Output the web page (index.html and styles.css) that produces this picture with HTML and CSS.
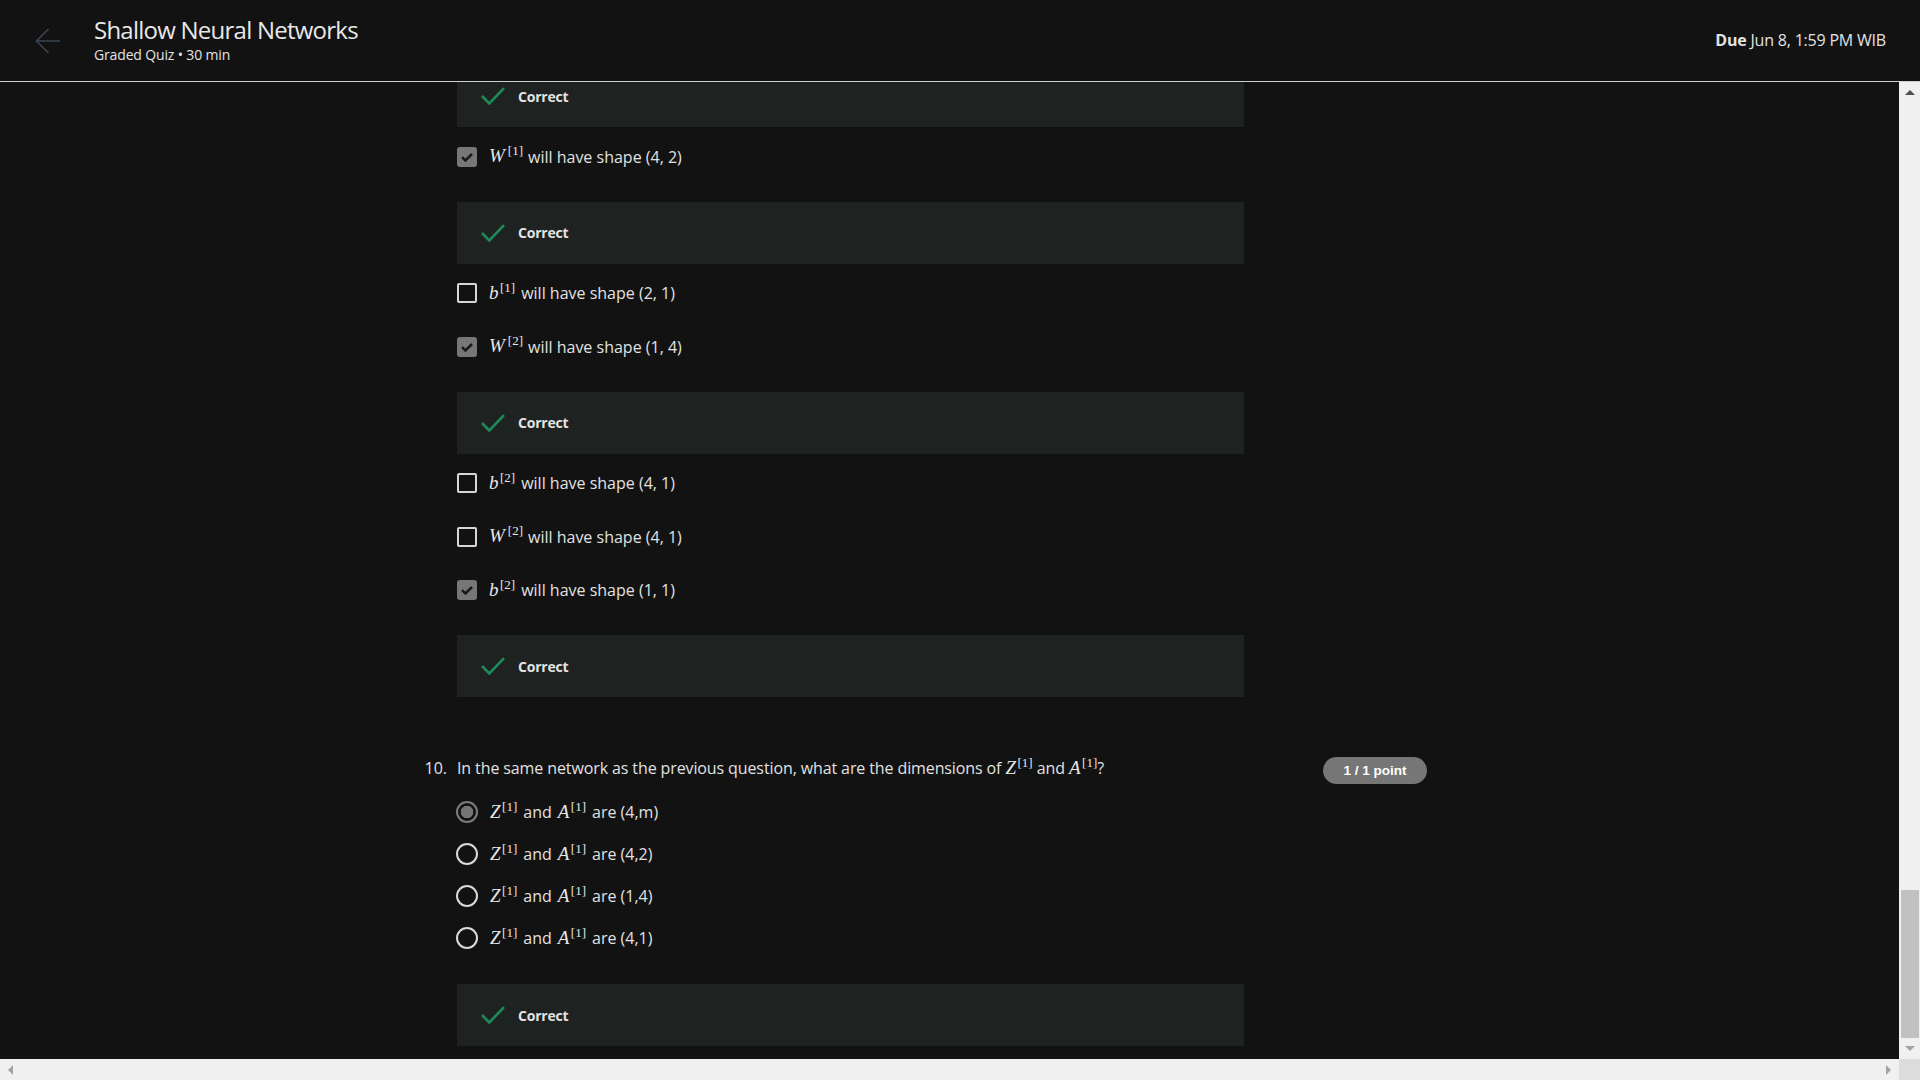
FILE: index.html
```html
<!DOCTYPE html>
<html lang="en">
<head>
<meta charset="utf-8">
<title>Shallow Neural Networks</title>
<link rel="stylesheet" href="styles.css">
</head>
<body>
<header class="topbar">
  <a class="back" aria-label="Back">
    <svg width="26" height="26" viewBox="0 0 26 26"><path d="M25 13H1.5M13.5 1L1.5 13l12 12" fill="none" stroke="#3b4552" stroke-width="1.6"/></svg>
  </a>
  <div class="titles">
    <h1 class="title">Shallow Neural Networks</h1>
    <div class="subtitle">Graded Quiz • 30 min</div>
  </div>
  <div class="due"><b>Due</b> Jun 8, 1:59 PM WIB</div>
</header>
<div class="frame">
  <div class="viewport">
    <main class="quiz">
      <div class="answers">
        <div class="feedback first"><svg class="ok" width="24" height="18" viewBox="0 0 24 18"><path d="M1 9l7.3 7.5L23 1.2" fill="none" stroke="#1f8a57" stroke-width="2.6"/></svg><span>Correct</span></div>

        <div class="opt"><span class="cb on"><svg width="20" height="20" viewBox="0 0 20 20"><path d="M5 10.2l3.4 3.3L15 7" fill="none" stroke="#1a1a1a" stroke-width="2.5"/></svg></span><span class="m w"><i>W</i><sup>[1]</sup></span><span>will have shape (4, 2)</span></div>
        <div class="feedback"><svg class="ok" width="24" height="18" viewBox="0 0 24 18"><path d="M1 9l7.3 7.5L23 1.2" fill="none" stroke="#1f8a57" stroke-width="2.6"/></svg><span>Correct</span></div>

        <div class="opt"><span class="cb"></span><span class="m"><i>b</i><sup>[1]</sup></span><span>will have shape (2, 1)</span></div>
        <div class="opt"><span class="cb on"><svg width="20" height="20" viewBox="0 0 20 20"><path d="M5 10.2l3.4 3.3L15 7" fill="none" stroke="#1a1a1a" stroke-width="2.5"/></svg></span><span class="m w"><i>W</i><sup>[2]</sup></span><span>will have shape (1, 4)</span></div>
        <div class="feedback"><svg class="ok" width="24" height="18" viewBox="0 0 24 18"><path d="M1 9l7.3 7.5L23 1.2" fill="none" stroke="#1f8a57" stroke-width="2.6"/></svg><span>Correct</span></div>

        <div class="opt"><span class="cb"></span><span class="m"><i>b</i><sup>[2]</sup></span><span>will have shape (4, 1)</span></div>
        <div class="opt"><span class="cb"></span><span class="m w"><i>W</i><sup>[2]</sup></span><span>will have shape (4, 1)</span></div>
        <div class="opt"><span class="cb on"><svg width="20" height="20" viewBox="0 0 20 20"><path d="M5 10.2l3.4 3.3L15 7" fill="none" stroke="#1a1a1a" stroke-width="2.5"/></svg></span><span class="m"><i>b</i><sup>[2]</sup></span><span>will have shape (1, 1)</span></div>
        <div class="feedback"><svg class="ok" width="24" height="18" viewBox="0 0 24 18"><path d="M1 9l7.3 7.5L23 1.2" fill="none" stroke="#1f8a57" stroke-width="2.6"/></svg><span>Correct</span></div>
      </div>

      <section class="question">
        <div class="q-head">
          <div class="qnum">10.</div>
          <div class="qtext">In the same network as the previous question, what are the dimensions of <span class="m"><i>Z</i><sup>[1]</sup></span> and <span class="m"><i>A</i><sup>[1]</sup></span>?</div>
          <div class="badge">1 / 1 point</div>
        </div>
        <div class="answers radios">
          <div class="ropt"><span class="rb on"></span><span class="m"><i>Z</i><sup>[1]</sup></span><span class="and">and</span><span class="m"><i>A</i><sup>[1]</sup></span><span>are (4,m)</span></div>
          <div class="ropt"><span class="rb"></span><span class="m"><i>Z</i><sup>[1]</sup></span><span class="and">and</span><span class="m"><i>A</i><sup>[1]</sup></span><span>are (4,2)</span></div>
          <div class="ropt"><span class="rb"></span><span class="m"><i>Z</i><sup>[1]</sup></span><span class="and">and</span><span class="m"><i>A</i><sup>[1]</sup></span><span>are (1,4)</span></div>
          <div class="ropt"><span class="rb"></span><span class="m"><i>Z</i><sup>[1]</sup></span><span class="and">and</span><span class="m"><i>A</i><sup>[1]</sup></span><span>are (4,1)</span></div>
          <div class="feedback last"><svg class="ok" width="24" height="18" viewBox="0 0 24 18"><path d="M1 9l7.3 7.5L23 1.2" fill="none" stroke="#1f8a57" stroke-width="2.6"/></svg><span>Correct</span></div>
        </div>
      </section>
    </main>
  </div>
  <div class="vscroll">
    <div class="sbtn"><span class="tri-up"></span></div>
    <div class="track"><div class="thumb"></div></div>
    <div class="sbtn"><span class="tri-down"></span></div>
  </div>
</div>
<div class="hscroll">
  <div class="hbtn"><span class="tri-left"></span></div>
  <div class="htrack"></div>
  <div class="hbtn"><span class="tri-right"></span></div>
  <div class="corner"></div>
</div>
</body>
</html>
```
FILE: styles.css
```css
* { box-sizing: border-box; }
html, body { margin: 0; padding: 0; }
body {
  width: 1920px;
  height: 1080px;
  overflow: hidden;
  background: #121212;
  color: #e1e1e1;
  font-family: "Open Sans", "Liberation Sans", sans-serif;
  display: flex;
  flex-direction: column;
}

/* header */
.topbar {
  height: 82px;
  flex: none;
  display: flex;
  align-items: center;
  padding: 0 34px 0 35px;
  border-bottom: 1px solid #cfcfcf;
  background: #121212;
}
.back { display: flex; width: 26px; height: 26px; }
.titles {
  margin-left: 33px;
  align-self: flex-start;
  padding-top: 15px;
}
.title {
  margin: 0;
  font-size: 24px;
  line-height: 30px;
  font-weight: 400;
  color: #e8e8e8;
  letter-spacing: -0.76px;
}
.subtitle {
  font-size: 14px;
  line-height: 20px;
  color: #e2e2e2;
  letter-spacing: -0.15px;
}
.due {
  margin-left: auto;
  margin-bottom: 2px;
  font-size: 16px;
  line-height: 24px;
  color: #e2e2e2;
  letter-spacing: -0.2px;
}
.due b { font-weight: 700; }

/* body frame */
.frame {
  flex: 1;
  display: flex;
  min-height: 0;
}
.viewport {
  flex: 1;
  overflow: hidden;
}
.quiz {
  margin: -17px 0 0 418px;
  width: 1010px;
}
.answers { padding-left: 39px; }

.feedback {
  width: 787px;
  height: 62px;
  margin-top: 21px;
  background: #1e2221;
  display: flex;
  align-items: center;
  padding-left: 24px;
  gap: 13px;
  font-size: 14px;
  font-weight: 700;
  color: #e3e3e3;
  letter-spacing: -0.2px;
}
.feedback.first { margin-top: 0; }
.feedback.last { margin-top: 25px; }
.ok { flex: none; }

.opt {
  display: flex;
  align-items: center;
  height: 53.5px;
  padding: 17.5px 0 12px;
  line-height: 24px;
  font-size: 16px;
}
.cb {
  flex: none;
  width: 20px;
  height: 20px;
  border: 2px solid #d6d6d6;
  border-radius: 2px;
  margin-right: 12px;
  display: flex;
}
.cb.on {
  border: none;
  background: #777777;
  border-radius: 3px;
}

/* math */
.m {
  font-family: "Liberation Serif", "DejaVu Serif", serif;
  white-space: nowrap;
  margin-right: 6px;
  color: #e6e6e6;
  line-height: 24px;
}
.m i { font-size: 19px; font-style: italic; }
.m sup {
  font-size: 13px;
  line-height: 0;
  vertical-align: 7px;
  margin-left: 1.5px;
}
.m.w sup { margin-left: 3px; }
.m.w { margin-right: 5px; }

/* question */
.question { margin-top: 57px; }
.q-head {
  display: flex;
  align-items: center;
  height: 27px;
  font-size: 16px;
}
.qnum {
  width: 39px;
  padding-right: 10px;
  text-align: right;
  flex: none;
}
.qtext {
  width: 787px;
  flex: none;
  line-height: 24px;
  height: 24px;
  letter-spacing: -0.11px;
}
.qtext .m { margin-right: 0; letter-spacing: 0; }
.badge {
  margin-left: 79px;
  margin-top: 5px;
  width: 104px;
  height: 27px;
  flex: none;
  border-radius: 14px;
  background: #767676;
  color: #ffffff;
  font-family: "Liberation Sans", Arial, sans-serif;
  font-weight: 700;
  font-size: 13.5px;
  display: flex;
  align-items: center;
  justify-content: center;
}
.radios { margin-top: 10px; }
.ropt {
  display: flex;
  align-items: center;
  height: 42px;
  padding: 9px 0;
  line-height: 24px;
  font-size: 16px;
}
.ropt .and { margin-right: 6px; }
.rb {
  flex: none;
  width: 22px;
  height: 22px;
  margin: 0 12px 0 -1px;
  border: 2px solid #dadada;
  border-radius: 50%;
}
.rb.on {
  border-color: #7c7c7c;
  background: radial-gradient(circle, #747474 0 6px, transparent 6.6px);
}

/* scrollbars */
.vscroll {
  width: 21px;
  flex: none;
  background: #f0f0f0;
  display: flex;
  flex-direction: column;
}
.sbtn {
  height: 21px;
  flex: none;
  display: flex;
  align-items: center;
  justify-content: center;
}
.track {
  flex: 1;
  display: flex;
  flex-direction: column;
}
.thumb {
  margin: auto 1px 0 2px;
  height: 148px;
  background: #c1c1c1;
}
.tri-up {
  width: 0; height: 0;
  border-left: 5px solid transparent;
  border-right: 5px solid transparent;
  border-bottom: 5px solid #505050;
}
.tri-down {
  width: 0; height: 0;
  border-left: 5px solid transparent;
  border-right: 5px solid transparent;
  border-top: 5px solid #a3a3a3;
}
.hscroll {
  height: 21px;
  flex: none;
  display: flex;
  background: #f0f0f0;
}
.hbtn {
  width: 21px;
  flex: none;
  display: flex;
  align-items: center;
  justify-content: center;
}
.htrack { flex: 1; }
.corner { width: 21px; flex: none; background: #dcdcdc; }
.tri-left {
  width: 0; height: 0;
  border-top: 5px solid transparent;
  border-bottom: 5px solid transparent;
  border-right: 5px solid #a3a3a3;
}
.tri-right {
  width: 0; height: 0;
  border-top: 5px solid transparent;
  border-bottom: 5px solid transparent;
  border-left: 5px solid #a3a3a3;
}
```
